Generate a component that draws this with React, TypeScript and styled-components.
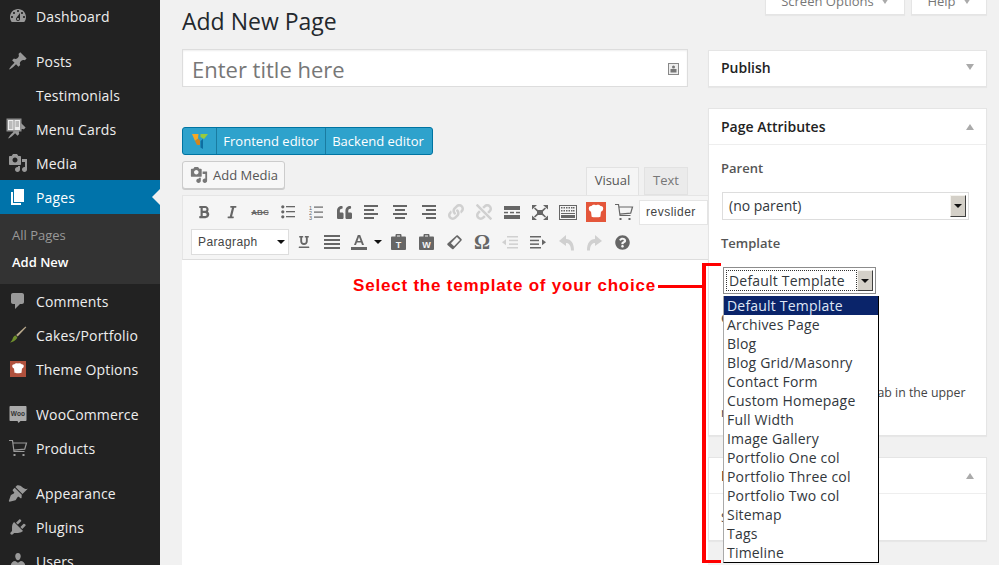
import React from 'react';
import styled, { createGlobalStyle } from 'styled-components';
import { FaBold, FaItalic, FaLink, FaUnlink, FaUnderline, FaQuoteLeft, FaQuestionCircle } from 'react-icons/fa';

const GlobalStyle = createGlobalStyle`
  html, body {
    margin: 0;
    padding: 0;
    width: 999px;
    height: 565px;
    overflow: hidden;
    background: #f1f1f1;
    font-family: "Open Sans", sans-serif;
  }
  * { box-sizing: border-box; }
`;

const Page = styled.div`
  position: relative;
  display: flex;
  width: 999px;
  height: 565px;
  overflow: hidden;
`;

/* ---------- sidebar ---------- */

const Sidebar = styled.nav`
  flex: 0 0 160px;
  height: 565px;
  background: #222;
  overflow: hidden;
`;

const MenuItem = styled.div<{ $active?: boolean; $gap?: number; $lift?: boolean }>`
  position: relative;
  display: flex;
  align-items: center;
  height: 34px;
  margin-top: ${p => p.$gap || 0}px;
  padding-bottom: ${p => (p.$lift ? 2 : 0)}px;
  background: ${p => (p.$active ? '#0073aa' : 'transparent')};
  color: ${p => (p.$active ? '#fff' : '#eee')};
  font-size: 14px;
  letter-spacing: 0.15px;
`;

const MenuIcon = styled.span<{ $active?: boolean }>`
  flex: 0 0 36px;
  display: flex;
  justify-content: center;
  color: ${p => (p.$active ? '#fff' : '#999')};
  svg { display: block; }
`;

const ActiveArrow = styled.span`
  position: absolute;
  right: 0;
  top: 9px;
  border: 8px solid transparent;
  border-right-color: #f1f1f1;
  border-left-width: 0;
`;

const SubMenu = styled.div`
  height: 70px;
  padding-top: 8px;
  background: #333;
  font-size: 13px;
`;

const SubItem = styled.div<{ $current?: boolean }>`
  height: 27px;
  line-height: 27px;
  padding-left: 12px;
  color: ${p => (p.$current ? '#fff' : '#999')};
  font-weight: ${p => (p.$current ? 600 : 400)};
`;

const Path = ({ d, size = 20 }: { d: string; size?: number }) => (
  <svg width={size} height={size} viewBox="0 0 20 20" fill="currentColor">
    <path d={d} />
  </svg>
);

const D = {
  dashboard: 'M3.76 16h12.48c1.1-1.37 1.76-3.11 1.76-5 0-4.42-3.58-8-8-8s-8 3.58-8 8c0 1.89.66 3.63 1.76 5zM10 4c.55 0 1 .45 1 1s-.45 1-1 1-1-.45-1-1 .45-1 1-1zM6 6c.55 0 1 .45 1 1s-.45 1-1 1-1-.45-1-1 .45-1 1-1zm8 0c.55 0 1 .45 1 1s-.45 1-1 1-1-.45-1-1 .45-1 1-1zm-5.37 5.55L12 7v6c0 1.1-.9 2-2 2s-2-.9-2-2c0-.57.24-1.08.63-1.45zM4 10c.55 0 1 .45 1 1s-.45 1-1 1-1-.45-1-1 .45-1 1-1zm12 0c.55 0 1 .45 1 1s-.45 1-1 1-1-.45-1-1 .45-1 1-1zm-5 3c0-.55-.45-1-1-1s-1 .45-1 1 .45 1 1 1 1-.45 1-1z',
  pin: 'M10.44 3.02l1.82-1.82 6.36 6.35-1.83 1.82c-1.05-.68-2.48-.57-3.41.36l-.75.75c-.92.93-1.04 2.35-.35 3.41l-1.83 1.82-2.41-2.41-2.8 2.79c-.42.42-3.38 2.71-3.8 2.29s1.86-3.39 2.28-3.81l2.79-2.79L4.1 9.36l1.83-1.82c1.05.69 2.48.57 3.4-.36l.75-.75c.93-.92 1.05-2.35.36-3.41z',
  media: 'M13 11V4c0-.55-.45-1-1-1h-1.67L9 1H5L3.67 3H2c-.55 0-1 .45-1 1v7c0 .55.45 1 1 1h10c.55 0 1-.45 1-1zM7 4.5c1.38 0 2.5 1.12 2.5 2.5S8.38 9.5 7 9.5 4.5 8.38 4.5 7 5.62 4.5 7 4.5zM14 6h5v10.5c0 1.38-1.12 2.5-2.5 2.5S14 17.88 14 16.5s1.12-2.5 2.5-2.5c.17 0 .34.02.5.05V9h-3V6zm-4 8.05V13h2v3.5c0 1.38-1.12 2.5-2.5 2.5S7 17.88 7 16.5 8.12 14 9.5 14c.17 0 .34.02.5.05z',
  page: 'M6 15V2h10v13H6zm-1 1h8v2H3V5h2v11z',
  comment: 'M5 2h9c1.1 0 2 .9 2 2v7c0 1.1-.9 2-2 2h-2l-5 5v-5H5c-1.1 0-2-.9-2-2V4c0-1.1.9-2 2-2z',
  appearance: 'M14.48 11.06L7.41 3.99l1.5-1.5c.5-.56 2.3-.47 3.51.32 1.21.8 1.43 1.28 2.91 2.1 1.18.64 2.45 1.26 4.45.85zm-.71.71L6.7 4.7 4.93 6.47c-.39.39-.39 1.02 0 1.41l1.06 1.06c.39.39.39 1.03 0 1.42-.6.6-2.6 1.4-3.3 2.2L1 17.5c-.4.5 0 1 .5 1.2l6-1.4c.8-.7 1.6-2.7 2.2-3.3.39-.39 1.02-.39 1.41 0l1.06 1.06c.39.39 1.02.39 1.41 0z',
  plugin: 'M13.11 4.36L9.87 7.6 8 5.73l3.24-3.24c.35-.34 1.05-.2 1.56.32.52.51.66 1.21.31 1.55zm-8 1.77l.91-1.12 9.01 9.01-1.19.84c-.71.71-2.63 1.16-3.82 1.16H6.14L4.9 17.26c-.59.59-1.54.59-2.12 0-.59-.58-.59-1.53 0-2.12l1.24-1.24v-3.88c0-1.13.4-3.19 1.09-3.89zm7.26 3.97l3.24-3.24c.34-.35 1.04-.21 1.55.31.52.51.66 1.21.31 1.55l-3.24 3.25z',
  users: 'M10 9.25c-2.27 0-2.73-3.44-2.73-3.44C7 4.02 7.82 2 9.97 2c2.16 0 2.98 2.02 2.71 3.81 0 0-.41 3.44-2.68 3.44zm0 2.57L12.72 10c2.39 0 4.52 2.33 4.52 4.53v2.49s-3.65 1.13-7.24 1.13c-3.65 0-7.24-1.13-7.24-1.13v-2.49c0-2.25 1.94-4.48 4.47-4.48z',
};

const MenuCardsIcon = () => (
  <svg width="24" height="22" viewBox="0 0 24 22">
    <path fill="#999" d="M11.5 5l1.700-1.700 6.400 6.300-1.800 1.800c-1-.7-2.500-.6-3.400.4l-.7.7c-1 .9-1 2.400-.4 3.400l-1.800 1.800-2.400-2.400-2.800 2.800c-.4.4-3.400 2.700-3.800 2.300s1.900-3.400 2.300-3.800l2.800-2.800-2.400-2.400z" />
    <rect x="0.500" y="0.500" width="15" height="13" fill="#8e8e8e" />
    <rect x="2" y="2" width="5.500" height="10" fill="#eee" />
    <rect x="8.500" y="2" width="5.500" height="10" fill="#eee" />
    <path stroke="#888" strokeWidth="1" d="M3 4h3.500M3 6h3.500M3 8h3.500M3 10h3.500M9.500 4h3.500M9.500 6h3.500M9.500 8h3.500" />
  </svg>
);

const BrushIcon = () => (
  <svg width="20" height="20" viewBox="0 0 20 20">
    <path fill="#b9a98c" d="M17.500 1.500l.8.8-8.600 9.300-1.600-1.500z" />
    <path fill="#6f8f2c" d="M7.600 10.600l1.700 1.600c-.6 2.400-3.500 4.800-7.300 5.300 1.600-1.400 2.300-2.600 2.800-4.200.5-1.500 1.400-2.400 2.800-2.700z" />
  </svg>
);

const ChefIcon = ({ bg, size = 16 }: { bg: string; size?: number }) => (
  <svg width={size} height={size} viewBox="0 0 16 16">
    <rect width="16" height="16" fill={bg} />
    <path fill="#fff" d="M4.400 3.200c.9-1.200 2.200-1.100 3.600-.6 1.400-.5 2.700-.6 3.600.6 1.700-.1 2.600 1.300 2 2.900-.3.8-1 1.400-1.600 1.500l-.5 4.100c-1 .6-6 .6-7 0L4 7.600c-.6-.1-1.300-.7-1.600-1.500-.6-1.600.3-3 2-2.900z" />
  </svg>
);

const WooIcon = () => (
  <svg width="18" height="19" viewBox="0 0 18 19">
    <path fill="#aaa" d="M1.500 1h15c.6 0 1 .4 1 1v13c0 .6-.4 1-1 1h-5l-2 2-1-2h-7c-.6 0-1-.4-1-1v-13c0-.6.4-1 1-1z" />
    <text x="9" y="11" textAnchor="middle" fontFamily="Liberation Sans, sans-serif" fontSize="6.500" fontWeight="700" fill="#333">Woo</text>
  </svg>
);

const CartIcon = ({ color, size = 20 }: { color: string; size?: number }) => (
  <svg width={size} height={size} viewBox="0 0 20 20" fill="none" stroke={color} strokeWidth="1.200">
    <path d="M1 2.500h3.500l1.500 11h10.500M4.800 5h13.700l-1.800 6.200-11 1" />
    <path strokeWidth="2" d="M6.500 16v2M15.500 16v2" />
  </svg>
);

/* ---------- main ---------- */

const Main = styled.main`
  flex: 1;
  display: grid;
  grid-template-columns: 506px 279px;
  column-gap: 20px;
  padding-left: 22px;
  align-items: start;
`;

const LeftColumn = styled.div`
  min-width: 0;
`;

const Heading = styled.h1`
  margin: 0;
  height: 49px;
  padding-top: 3px;
  font-size: 23px;
  line-height: 36px;
  font-weight: 400;
  color: #23282d;
`;

const TitleField = styled.div`
  display: flex;
  align-items: center;
  justify-content: space-between;
  height: 38px;
  padding: 2px 8px 0 9px;
  background: #fff;
  border: 1px solid #ddd;
  box-shadow: inset 0 1px 2px rgba(0, 0, 0, 0.07);
  font-size: 22px;
  color: #777;
`;

const ComposerBar = styled.div`
  display: flex;
  width: 251px;
  height: 28px;
  margin-top: 40px;
  background: #2ea2cc;
  border: 1px solid #0074a2;
  border-radius: 3px;
  color: #fff;
  font-size: 13px;
`;

const ComposerButton = styled.div<{ $width: number; $logo?: boolean }>`
  display: flex;
  align-items: center;
  justify-content: center;
  width: ${p => p.$width}px;
  border-left: ${p => (p.$logo ? 'none' : '1px solid #1a7ba0')};
  white-space: nowrap;
`;

const EditorTopRow = styled.div`
  display: flex;
  align-items: flex-start;
  justify-content: space-between;
  height: 34px;
  margin-top: 6px;
`;

const AddMediaButton = styled.div`
  display: flex;
  align-items: center;
  gap: 5px;
  width: 103px;
  height: 28px;
  padding-left: 7px;
  background: #f7f7f7;
  border: 1px solid #ccc;
  border-radius: 3px;
  color: #555;
  font-size: 13px;
  box-shadow: 0 1px 0 #ccc;
  svg { color: #777; }
`;

const Tabs = styled.div`
  display: flex;
  align-items: flex-end;
  gap: 5px;
  height: 34px;
`;

const Tab = styled.div<{ $active?: boolean; $width: number }>`
  width: ${p => p.$width}px;
  height: 28px;
  text-align: center;
  line-height: 25px;
  background: ${p => (p.$active ? '#f5f5f5' : '#ebebeb')};
  border: 1px solid #e2e2e2;
  border-bottom: ${p => (p.$active ? 'none' : '1px solid #e2e2e2')};
  font-size: 13px;
  color: ${p => (p.$active ? '#555' : '#777')};
`;

const Editor = styled.div`
  width: 526px;
`;

const Toolbar = styled.div`
  height: 65px;
  padding: 1px 0 0 7px;
  background: #f5f5f5;
  border: 1px solid #e5e5e5;
  border-right: none;
  border-bottom: 1px solid #ddd;
  color: #666;
`;

const ToolRow = styled.div`
  display: flex;
  align-items: center;
  height: 30px;
`;

const Tool = styled.span<{ $off?: boolean; $width?: number }>`
  flex: 0 0 ${p => p.$width || 28}px;
  display: flex;
  align-items: center;
  justify-content: center;
  color: ${p => (p.$off ? '#d0d0d0' : '#666')};
  svg { display: block; }
`;

const ToolInput = styled.div`
  flex: 1;
  height: 25px;
  margin-left: 1px;
  padding-left: 6px;
  background: #fff;
  border: 1px solid #e5e5e5;
  font-family: "Liberation Sans", sans-serif;
  font-size: 12px;
  letter-spacing: 0.5px;
  line-height: 23px;
  color: #444;
`;

const FormatSelect = styled.div`
  display: flex;
  align-items: center;
  justify-content: space-between;
  width: 98px;
  height: 26px;
  margin: 0 1px 0 1px;
  padding: 0 3px 0 6px;
  background: #fff;
  border: 1px solid #ddd;
  font-family: "Liberation Sans", sans-serif;
  font-size: 12px;
  letter-spacing: 0.4px;
  color: #444;
`;

const Caret = styled.span<{ $color?: string }>`
  width: 0;
  height: 0;
  border: 4px solid transparent;
  border-bottom-width: 0;
  border-top: 4px solid ${p => p.$color || '#111'};
`;

const Abc = styled.span`
  font-family: "Liberation Sans", sans-serif;
  font-size: 8px;
  font-weight: 700;
  text-decoration: line-through;
`;

const Omega = styled.span`
  font-family: "Liberation Serif", serif;
  font-size: 20px;
  font-weight: 700;
  line-height: 1;
`;

const EditorBody = styled.div`
  height: 320px;
  background: #fff;
`;

/* ---------- right column ---------- */

const RightColumn = styled.aside`
  min-width: 0;
`;

const ScreenTabs = styled.div`
  display: flex;
  justify-content: flex-end;
  gap: 6px;
  height: 15px;
  margin-bottom: 35px;
`;

const ScreenTab = styled.div<{ $width: number }>`
  display: flex;
  align-items: center;
  justify-content: center;
  gap: 7px;
  width: ${p => p.$width}px;
  height: 28px;
  margin-top: -13px;
  background: #fff;
  border: 1px solid #e5e5e5;
  box-shadow: 0 1px 1px rgba(0, 0, 0, 0.04);
  font-size: 13px;
  color: #777;
`;

const Box = styled.section<{ $height: number; $gap?: number }>`
  height: ${p => p.$height}px;
  margin-bottom: ${p => p.$gap ?? 21}px;
  background: #fff;
  border: 1px solid #e5e5e5;
  box-shadow: 0 1px 1px rgba(0, 0, 0, 0.04);
`;

const BoxHeader = styled.div<{ $ruled?: boolean }>`
  display: flex;
  align-items: center;
  justify-content: space-between;
  height: ${p => (p.$ruled ? 36 : 32)}px;
  padding: 0 12px;
  border-bottom: ${p => (p.$ruled ? '1px solid #eee' : 'none')};
  font-size: 14px;
  font-weight: 600;
  color: #222;
`;

const Toggle = styled.span<{ $up?: boolean }>`
  width: 0;
  height: 0;
  border: 4px solid transparent;
  border-width: ${p => (p.$up ? '0 4px 6px' : '6px 4px 0')};
  border-bottom-color: ${p => (p.$up ? '#aaa' : 'transparent')};
  border-top-color: ${p => (p.$up ? 'transparent' : '#aaa')};
`;

const BoxBody = styled.div`
  padding: 14px 12px 0;
  font-size: 13px;
  color: #444;
`;

const FieldLabel = styled.div<{ $gap?: number }>`
  height: 18px;
  margin-top: ${p => p.$gap || 0}px;
  line-height: 18px;
  font-weight: 600;
  color: #555;
`;

const NativeSelect = styled.div`
  display: flex;
  align-items: center;
  justify-content: space-between;
  width: 247px;
  height: 28px;
  margin: 15px 0 14px 1px;
  padding: 0 2px 1px 6px;
  background: #fff;
  border: 1px solid #ddd;
  font-size: 14px;
  color: #32373c;
`;

const ClassicArrow = styled.span<{ $height: number }>`
  display: flex;
  align-items: center;
  justify-content: center;
  width: 16px;
  height: ${p => p.$height}px;
  background: #d4d0c8;
  border: 1px solid;
  border-color: #f5f3ee #404040 #404040 #f5f3ee;
`;

const TemplateSelect = styled.div`
  display: flex;
  align-items: center;
  justify-content: space-between;
  width: 153px;
  height: 27px;
  margin: 15px 0 0 2px;
  padding: 2px;
  background: #fff;
  border: 1px solid #8c8c8c;
  font-size: 14px;
  letter-spacing: 0.2px;
  color: #32373c;
`;

const FocusedValue = styled.span`
  flex: 1;
  height: 21px;
  line-height: 19px;
  padding-left: 2px;
  border: 1px dotted #333;
`;

const HelpText = styled.p`
  margin: 56px 0 0;
  font-size: 12.300px;
  line-height: 20px;
  text-indent: 8px;
  color: #444;
`;

/* the open list and the annotation sit over the page */

const OptionList = styled.ul`
  position: absolute;
  left: 723px;
  top: 296px;
  width: 156px;
  height: 267px;
  margin: 0;
  padding: 0;
  list-style: none;
  background: #fff;
  border: 1px solid #000;
  border-left-color: #aaa;
  border-top: none;
  font-size: 14px;
  letter-spacing: 0.2px;
  color: #32373c;
`;

const OptionRow = styled.li<{ $selected?: boolean }>`
  height: 19px;
  line-height: 19px;
  padding-left: 3px;
  background: ${p => (p.$selected ? '#0a246a' : 'transparent')};
  color: ${p => (p.$selected ? '#dfe6f5' : 'inherit')};
`;

const Callout = styled.div`
  position: absolute;
  left: 353px;
  top: 276px;
  font-family: "Liberation Sans", sans-serif;
  font-size: 17px;
  line-height: 20px;
  font-weight: 700;
  letter-spacing: 0.8px;
  color: #f00;
  white-space: nowrap;
`;

const CalloutLine = styled.div`
  position: absolute;
  left: 658px;
  top: 285px;
  width: 45px;
  height: 3px;
  background: #f00;
`;

const Bracket = styled.div`
  position: absolute;
  left: 702px;
  top: 263px;
  width: 19px;
  height: 300px;
  border: 4px solid #f00;
  border-right: none;
  border-top-width: 3px;
  border-bottom-width: 3px;
`;

/* ---------- toolbar drawings ---------- */

const Bars = ({ rows }: { rows: number[][] }) => (
  <svg width="16" height="14" viewBox="0 0 16 14" fill="currentColor">
    {rows.map((r, i) => (
      <rect key={i} x={r[0]} y={r[1]} width={r[2]} height="2" />
    ))}
  </svg>
);

const BulletList = () => (
  <svg width="14" height="14" viewBox="0 0 14 14" fill="currentColor">
    {[1, 6, 11].map(y => (
      <g key={y}>
        <circle cx="1.800" cy={y + 0.8} r="1.600" />
        <rect x="5" y={y} width="9" height="1.300" />
      </g>
    ))}
  </svg>
);

const NumberList = () => (
  <svg width="14" height="15" viewBox="0 0 14 15" fill="currentColor">
    {[1, 2, 3].map(n => (
      <g key={n}>
        <text x="0" y={n * 5 - 0.5} fontSize="5.500" fontFamily="Liberation Sans, sans-serif">{n}</text>
        <rect x="5" y={n * 5 - 3.5} width="9" height="1.200" />
      </g>
    ))}
  </svg>
);

const MoreIcon = () => (
  <svg width="16" height="13" viewBox="0 0 16 13" fill="currentColor">
    <rect width="16" height="4" />
    <rect y="9" width="16" height="4" />
    <rect y="5.800" width="4" height="1.500" />
    <rect x="6" y="5.800" width="4" height="1.500" />
    <rect x="12" y="5.800" width="4" height="1.500" />
  </svg>
);

const FullscreenIcon = () => (
  <svg width="16" height="15" viewBox="0 0 16 15" fill="currentColor">
    <path d="M0 0h5L0 4.500zM16 0h-5l5 4.500zM0 15h5l-5-4.500zM16 15h-5l5-4.500z" />
    <path d="M3 2.500l3 2.500h4l3-2.500 1 1-3 3v2l3 3-1 1-3-2.500H6l-3 2.500-1-1 3-3v-2l-3-3z" />
  </svg>
);

const KeyboardIcon = () => (
  <svg width="18" height="15" viewBox="0 0 18 15" fill="currentColor">
    <rect x="0.500" y="0.500" width="17" height="14" fill="none" stroke="currentColor" />
    {[2, 5].map(y =>
      [2, 4.500, 7, 9.500, 12, 14].map(x => <rect key={`${x}-${y}`} x={x} y={y} width="1.500" height="1.500" />),
    )}
    <rect x="2" y="8" width="14" height="1" />
    <rect x="2" y="10" width="14" height="3" />
  </svg>
);

const PasteIcon = ({ letter }: { letter: string }) => (
  <svg width="15" height="16" viewBox="0 0 15 16" fill="currentColor">
    <path d="M1 2.500h3.500V1c0-.5.500-1 1-1h4c.5 0 1 .5 1 1v1.500H14c.5 0 1 .5 1 1V15c0 .5-.5 1-1 1H1c-.5 0-1-.5-1-1V3.500c0-.5.500-1 1-1zM6 1.500v1h3v-1z" />
    <text x="7.500" y="13.500" textAnchor="middle" fontSize="9" fontWeight="700" fontFamily="Liberation Sans, sans-serif" fill="#f5f5f5">{letter}</text>
  </svg>
);

const EraserIcon = () => (
  <svg width="15" height="15" viewBox="0 0 15 15">
    <path fill="#666" d="M9.500.500c.4-.4 1-.4 1.400 0l3.600 3.600c.4.4.4 1 0 1.400l-8 8.500c-.4.4-1 .4-1.400 0L.5 10c-.4-.4-.4-1 0-1.400z" />
    <path fill="#f5f5f5" d="M9.900 2l3.100 3-6 6.300-3.100-3.100z" />
  </svg>
);

const OutdentIcon = () => (
  <svg width="16" height="13" viewBox="0 0 16 13" fill="currentColor">
    <rect x="5" y="0" width="11" height="1.500" />
    <rect x="7" y="3.700" width="9" height="1.500" />
    <rect x="7" y="7.400" width="9" height="1.500" />
    <rect x="5" y="11" width="11" height="1.500" />
    <path d="M0 6.300l4-3v6z" />
  </svg>
);

const IndentIcon = () => (
  <svg width="16" height="13" viewBox="0 0 16 13" fill="currentColor">
    <rect x="0" y="0" width="11" height="1.500" />
    <rect x="0" y="3.700" width="9" height="1.500" />
    <rect x="0" y="7.400" width="9" height="1.500" />
    <rect x="0" y="11" width="11" height="1.500" />
    <path d="M16 6.300l-4-3v6z" />
  </svg>
);

const UndoArrow = styled.svg<{ $flip?: boolean }>`
  transform: ${p => (p.$flip ? 'scaleX(-1)' : 'none')};
`;

const UndoIcon = ({ flip }: { flip?: boolean }) => (
  <UndoArrow $flip={flip} width="17" height="17" viewBox="0 0 17 17" fill="currentColor">
    <path d="M8 1L1 7l7 5V9c3 0 5 2.500 5 7.500h3C16 9 13 5 8 5z" />
  </UndoArrow>
);

const ComposerLogo = () => (
  <svg width="16" height="17" viewBox="0 0 16 17">
    <path fill="#f7a823" d="M0 1h6.500L6 5.500 3 8z" />
    <path fill="#9acb3c" d="M8.500 1H16l-4 5-3.500-2z" />
    <path fill="#d5861f" d="M3 8l3.500-2.500L8 7.500V12H5z" />
    <path fill="#0d6ea1" d="M8.500 8L11 6v10l-2.500-1.500z" />
  </svg>
);

const OPTIONS = [
  'Default Template',
  'Archives Page',
  'Blog',
  'Blog Grid/Masonry',
  'Contact Form',
  'Custom Homepage',
  'Full Width',
  'Image Gallery',
  'Portfolio One col',
  'Portfolio Three col',
  'Portfolio Two col',
  'Sitemap',
  'Tags',
  'Timeline',
];

export default function App() {
  return (
    <>
      <GlobalStyle />
      <Page>
        <Sidebar>
          <MenuItem $lift><MenuIcon><Path d={D.dashboard} /></MenuIcon>Dashboard</MenuItem>
          <MenuItem $gap={10}><MenuIcon><Path d={D.pin} /></MenuIcon>Posts</MenuItem>
          <MenuItem><MenuIcon />Testimonials</MenuItem>
          <MenuItem><MenuIcon><MenuCardsIcon /></MenuIcon>Menu Cards</MenuItem>
          <MenuItem><MenuIcon><Path d={D.media} /></MenuIcon>Media</MenuItem>
          <MenuItem $active><MenuIcon $active><Path d={D.page} /></MenuIcon>Pages<ActiveArrow /></MenuItem>
          <SubMenu>
            <SubItem>All Pages</SubItem>
            <SubItem $current>Add New</SubItem>
          </SubMenu>
          <MenuItem><MenuIcon><Path d={D.comment} /></MenuIcon>Comments</MenuItem>
          <MenuItem><MenuIcon><BrushIcon /></MenuIcon>Cakes/Portfolio</MenuItem>
          <MenuItem><MenuIcon><ChefIcon bg="#b0513d" /></MenuIcon>Theme Options</MenuItem>
          <MenuItem $gap={11}><MenuIcon><WooIcon /></MenuIcon>WooCommerce</MenuItem>
          <MenuItem><MenuIcon><CartIcon color="#999" /></MenuIcon>Products</MenuItem>
          <MenuItem $gap={11}><MenuIcon><Path d={D.appearance} /></MenuIcon>Appearance</MenuItem>
          <MenuItem><MenuIcon><Path d={D.plugin} /></MenuIcon>Plugins</MenuItem>
          <MenuItem><MenuIcon><Path d={D.users} /></MenuIcon>Users</MenuItem>
        </Sidebar>

        <Main>
          <LeftColumn>
            <Heading>Add New Page</Heading>
            <TitleField>
              Enter title here
              <svg width="11" height="12" viewBox="0 0 11 12">
                <rect x="0.500" y="0.500" width="10" height="11" fill="#eee" stroke="#888" />
                <circle cx="5.500" cy="4" r="1.500" fill="#777" />
                <rect x="2.500" y="6" width="6" height="3.500" fill="#777" />
              </svg>
            </TitleField>

            <ComposerBar>
              <ComposerButton $logo $width={33}><ComposerLogo /></ComposerButton>
              <ComposerButton $width={109}>Frontend editor</ComposerButton>
              <ComposerButton $width={105}>Backend editor</ComposerButton>
            </ComposerBar>

            <EditorTopRow>
              <AddMediaButton><Path d={D.media} size={18} />Add Media</AddMediaButton>
              <Tabs>
                <Tab $active $width={53}>Visual</Tab>
                <Tab $width={44}>Text</Tab>
              </Tabs>
            </EditorTopRow>

            <Editor>
              <Toolbar>
                <ToolRow>
                  <Tool><FaBold size={14} /></Tool>
                  <Tool><FaItalic size={14} /></Tool>
                  <Tool><Abc>ABC</Abc></Tool>
                  <Tool><BulletList /></Tool>
                  <Tool><NumberList /></Tool>
                  <Tool><FaQuoteLeft size={15} /></Tool>
                  <Tool><Bars rows={[[0, 0, 14], [0, 4, 10], [0, 8, 14], [0, 12, 10]]} /></Tool>
                  <Tool><Bars rows={[[1, 0, 14], [3, 4, 10], [1, 8, 14], [3, 12, 10]]} /></Tool>
                  <Tool><Bars rows={[[2, 0, 14], [6, 4, 10], [2, 8, 14], [6, 12, 10]]} /></Tool>
                  <Tool $off><FaLink size={16} /></Tool>
                  <Tool $off><FaUnlink size={16} /></Tool>
                  <Tool><MoreIcon /></Tool>
                  <Tool><FullscreenIcon /></Tool>
                  <Tool><KeyboardIcon /></Tool>
                  <Tool><ChefIcon bg="#e4563a" size={20} /></Tool>
                  <Tool><CartIcon color="#666" /></Tool>
                  <ToolInput>revslider</ToolInput>
                </ToolRow>
                <ToolRow>
                  <FormatSelect>Paragraph<Caret /></FormatSelect>
                  <Tool><FaUnderline size={12} /></Tool>
                  <Tool><Bars rows={[[0, 0, 16], [0, 4, 16], [0, 8, 16], [0, 12, 16]]} /></Tool>
                  <Tool $width={26}>
                    <svg width="16" height="16" viewBox="0 0 16 16" fill="currentColor">
                      <path d="M6.800 1h2.400l3.800 10h-2l-.9-2.500H5.900L5 11H3zM6.500 7h3L8 3z" />
                      <rect y="13" width="16" height="3" />
                    </svg>
                  </Tool>
                  <Tool $width={12}><Caret /></Tool>
                  <Tool><PasteIcon letter="T" /></Tool>
                  <Tool><PasteIcon letter="W" /></Tool>
                  <Tool><EraserIcon /></Tool>
                  <Tool><Omega>Ω</Omega></Tool>
                  <Tool $off><OutdentIcon /></Tool>
                  <Tool><IndentIcon /></Tool>
                  <Tool $off><UndoIcon /></Tool>
                  <Tool $off><UndoIcon flip /></Tool>
                  <Tool><FaQuestionCircle size={15} /></Tool>
                </ToolRow>
              </Toolbar>
              <EditorBody />
            </Editor>
          </LeftColumn>

          <RightColumn>
            <ScreenTabs>
              <ScreenTab $width={140}>Screen Options <Toggle /></ScreenTab>
              <ScreenTab $width={76}>Help <Toggle /></ScreenTab>
            </ScreenTabs>

            <Box $height={37}>
              <BoxHeader>Publish<Toggle /></BoxHeader>
            </Box>

            <Box $height={328}>
              <BoxHeader $ruled>Page Attributes<Toggle $up /></BoxHeader>
              <BoxBody>
                <FieldLabel>Parent</FieldLabel>
                <NativeSelect>
                  (no parent)
                  <ClassicArrow $height={22}><Caret /></ClassicArrow>
                </NativeSelect>
                <FieldLabel>Template</FieldLabel>
                <TemplateSelect>
                  <FocusedValue>Default Template</FocusedValue>
                  <ClassicArrow $height={21}><Caret /></ClassicArrow>
                </TemplateSelect>
                <FieldLabel $gap={15}>Order</FieldLabel>
                <HelpText>Need help? Use the Help tab in the upper right of your screen.</HelpText>
              </BoxBody>
            </Box>

            <Box $height={84} $gap={0}>
              <BoxHeader $ruled>Featured Image<Toggle $up /></BoxHeader>
              <BoxBody>Set featured image</BoxBody>
            </Box>
          </RightColumn>
        </Main>

        <Callout>Select the template of your choice</Callout>
        <CalloutLine />
        <Bracket />
        <OptionList>
          {OPTIONS.map((name, i) => (
            <OptionRow key={name} $selected={i === 0}>{name}</OptionRow>
          ))}
        </OptionList>
      </Page>
    </>
  );
}
